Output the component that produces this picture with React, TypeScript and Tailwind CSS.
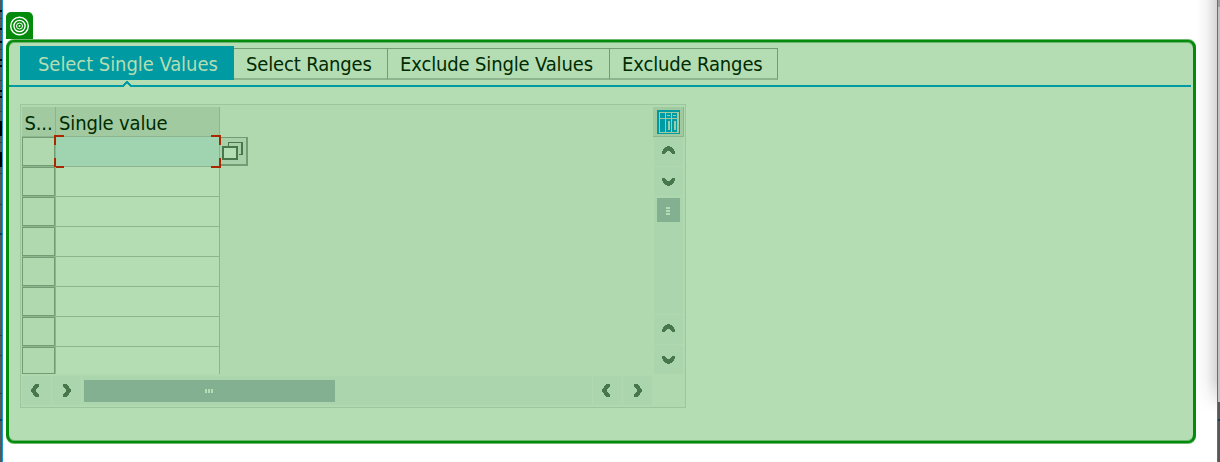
import React from "react";

type Direction = "up" | "down" | "left" | "right";

const chevrons: Record<Direction, string> = {
  up: "M5 0h3v1h2v1h1v1h1v2h1v3h-3v-1h-1v-1h-1v-1h-3v1h-1v1h-1v1h-3v-3h1v-2h1v-1h1v-1h2z",
  down: "M5 8h3v-1h2v-1h1v-1h1v-2h1v-3h-3v1h-1v1h-1v1h-3v-1h-1v-1h-1v-1h-3v3h1v2h1v1h1v1h2z",
  left: "M8 0v3h-1v1h-1v1h-1v3h1v1h1v1h1v3h-4v-1h-1v-1h-1v-2h-1v-1h-1v-3h1v-1h1v-2h1v-1h1v-1z",
  right: "M0 0v3h1v1h1v1h1v3h-1v1h-1v1h-1v3h4v-1h1v-1h1v-2h1v-1h1v-3h-1v-1h-1v-2h-1v-1h-1v-1z",
};

const chevronPadding: Record<Direction, string> = {
  up: "pt-[9px] pl-[8px]",
  down: "pt-[11px] pl-[8px]",
  left: "pt-[8px] pl-[9px]",
  right: "pt-[8px] pl-[11px]",
};

function ScrollButton({ dir }: { dir: Direction }) {
  const vertical = dir === "up" || dir === "down";
  const w = vertical ? 13 : 8;
  const h = vertical ? 8 : 13;
  return (
    <div className={`h-[29px] w-[29px] shrink-0 bg-[#abd5ac] ${chevronPadding[dir]}`}>
      <svg
        className="block"
        width={w}
        height={h}
        viewBox={`0 0 ${w} ${h}`}
        fill="#48774c"
        shapeRendering="crispEdges"
      >
        <path d={chevrons[dir]} />
      </svg>
    </div>
  );
}

function Target() {
  return (
    <svg className="block" width="27" height="27" viewBox="0 0 27 27" fill="none" stroke="#fff" strokeWidth="1.4">
      <circle cx="13.5" cy="14" r="8.8" />
      <circle cx="13.5" cy="14" r="5.6" />
      <circle cx="13.5" cy="14" r="3" strokeWidth="1" />
      <circle cx="13.5" cy="14" r="1" fill="#fff" stroke="none" />
    </svg>
  );
}

function ColumnsIcon() {
  return (
    <svg className="block" width="23" height="24" viewBox="0 0 23 24" shapeRendering="crispEdges">
      <path fill="#009aa2" d="M0 0h23v24h-23z" />
      <path fill="#a1caa1" d="M2 2h20v21h-20z" />
      <path
        fill="#009aa2"
        d="M3 3h5v5h-5zM9 3h5v5h-5zM15 3h5v5h-5zM3 9h5v13h-5zM9 9h5v13h-5zM15 9h5v13h-5z"
      />
      <path fill="#a1caa1" d="M10 5h3v1h-3zM16 5h3v1h-3zM11 11h2v9h-2zM17 11h2v9h-2z" />
    </svg>
  );
}

function ValueHelpIcon() {
  return (
    <svg className="block" width="21" height="18" viewBox="0 0 21 18" shapeRendering="crispEdges">
      <path fill="#48774c" d="M6 0h15v13h-4v-1h2v-11h-12v3h-1z" />
      <path fill="#48774c" d="M0 4h16v14h-16z" />
      <path fill="#b4ddb4" d="M2 6h12v10h-12z" />
    </svg>
  );
}

const tabs = [
  { label: "Select Ranges", width: "w-[154px]" },
  { label: "Exclude Single Values", width: "w-[222px]" },
  { label: "Exclude Ranges", width: "w-[168px]" },
];

const darkMarks = [10, 28, 41, 59, 65, 90, 96];
const faintMarks = [18, 49, 80, 111, 142, 173, 204, 335, 355, 393];

export default function App() {
  return (
    <div className="flex h-[462px] w-[1220px] overflow-hidden bg-white font-['DejaVu_Sans_Condensed','DejaVu_Sans',sans-serif] text-[20px] leading-[28px] tracking-[-0.14px] whitespace-nowrap text-[#002b00]">
      <div className="relative w-[2px] shrink-0 bg-[#575757]">
        {faintMarks.map((y) => (
          <div key={y} className="absolute left-0 h-px w-[2px] bg-[#3c3c3c]" style={{ top: y }} />
        ))}
        {darkMarks.map((y) => (
          <div key={y} className="absolute left-0 h-[2px] w-[2px] bg-black" style={{ top: y }} />
        ))}
        <div className="absolute top-[121px] left-0 h-[15px] w-[2px] bg-black" />
        <div className="absolute top-[152px] left-0 h-[15px] w-[2px] bg-black" />
        <div className="absolute top-[233px] left-0 h-[2px] w-[2px] bg-[#0b3f5c]" />
        <div className="absolute top-[419px] left-0 h-[2px] w-[2px] bg-[#0b3f5c]" />
      </div>
      <div className="mr-[3px] w-px shrink-0 bg-[#1698d2]" />

      <main className="w-[1190px] shrink-0 pt-[12px]">
        <div className="mb-px h-[27px] w-[27px] rounded-t-[5px] bg-[#048b0b]">
          <Target />
        </div>

        <section className="h-[403px] rounded-[8px] border-x-[3px] border-y-2 border-[#048b0b] bg-[#b4ddb4] pt-[4px] shadow-[0_-1px_0_#70b973,0_1px_0_#70b973,inset_0_1px_0_#6cb56f,inset_0_-1px_0_#6cb56f]">
          <nav className="flex h-[34px] pl-[11px]">
            <div className="w-[214px] bg-[#009aa2] pt-[4px] pl-[18px] tracking-[-0.06px] text-[#b4ddb4]">
              Select Single Values
            </div>
            {tabs.map((t) => (
              <div
                key={t.label}
                className={`${t.width} mt-[2px] h-[32px] border-t border-r border-b-2 border-t-[#729c74] border-r-[#729c74] border-b-[#8db58d] pt-px pl-[12px]`}
              >
                {t.label}
              </div>
            ))}
          </nav>
          <svg className="block" width="1184" height="7" viewBox="0 0 1184 7" shapeRendering="crispEdges">
            <path d="M0 5h1182v2h-1182z" fill="#009aa2" />
            <path d="M115 5h6v2h-6z" fill="#b4ddb4" />
            <path
              d="M117 1h2v1h1v1h1v1h1v1h1v2h-2v-1h-1v-1h-1v-1h-2v1h-1v1h-1v1h-2v-2h1v-1h1v-1h1v-1h1z"
              fill="#009aa2"
            />
          </svg>

          <div className="mt-[17px] ml-[11px] flex h-[304px] w-[666px] flex-col gap-[2px] border border-[#9cc69d] bg-[#b0d9b0] pt-[2px] pr-px pl-px">
            <div className="flex h-[267px]">
              <div className="w-[198px] border-r border-[#8db58d] bg-[#b4ddb4]">
                <div className="flex h-[30px] border-b border-[#8db58d] bg-[#a1caa1]">
                  <div className="w-[34px] border-r border-[#8db58d] pt-[2px] pl-[2.5px]">S...</div>
                  <div className="pt-[2px] pl-[3px]">Single value</div>
                </div>
                {Array.from({ length: 8 }, (_, i) => (
                  <div
                    key={i}
                    className={`relative flex ${i === 7 ? "h-[27px]" : "h-[30px] border-b border-[#8db58d]"}`}
                  >
                    <div className="w-[34px] border-r border-[#8db58d]">
                      <div className="h-full w-[33px] border border-[#729c74] bg-[#b0d9b0]" />
                    </div>
                    {i === 0 && (
                      <>
                        <div className="h-[29px] w-[163px] bg-[#a0d3b0]" />
                        <svg
                          className="absolute -top-[2px] left-[32px]"
                          width="167"
                          height="33"
                          fill="none"
                          stroke="#aa2700"
                          strokeWidth="2"
                          shapeRendering="crispEdges"
                        >
                          <path d="M10 1H1V10M157 1H166V10M10 32H1V23M157 32H166V23" />
                        </svg>
                      </>
                    )}
                  </div>
                ))}
              </div>
              <div className="mt-[30px] h-[29px] w-[28px] border-t border-r-2 border-b-2 border-[#729c74] bg-[#a8d1a9] pt-[4px] pl-[2px]">
                <ValueHelpIcon />
              </div>
              <div className="ml-auto flex w-[31px] flex-col items-center">
                <div className="h-[30px] w-[31px] shrink-0 border-r border-b border-[#8db58d] bg-[#a1caa1] pt-[3px] pl-[4px]">
                  <ColumnsIcon />
                </div>
                <div className="flex flex-col gap-px">
                  <ScrollButton dir="up" />
                  <ScrollButton dir="down" />
                  <div className="h-[117px] w-[29px] bg-[#abd5ac] pt-px pl-[3px]">
                    <div className="flex h-[24px] w-[23px] flex-col gap-px bg-[#82b090] pt-[9px] pl-[9px]">
                      <div className="h-[2px] w-[4px] bg-[#b4ddb4]" />
                      <div className="h-[2px] w-[4px] bg-[#b4ddb4]" />
                      <div className="h-[2px] w-[4px] bg-[#b4ddb4]" />
                    </div>
                  </div>
                  <ScrollButton dir="up" />
                  <ScrollButton dir="down" />
                </div>
              </div>
            </div>
            <div className="flex gap-px">
              <ScrollButton dir="left" />
              <ScrollButton dir="right" />
              <div className="h-[29px] w-[510px] bg-[#abd5ac] pt-[4px] pl-[2px]">
                <div className="flex h-[22px] w-[251px] gap-px bg-[#82b090] pt-[9px] pl-[121px]">
                  <div className="h-[4px] w-[2px] bg-[#b4ddb4]" />
                  <div className="h-[4px] w-[2px] bg-[#b4ddb4]" />
                  <div className="h-[4px] w-[2px] bg-[#b4ddb4]" />
                </div>
              </div>
              <ScrollButton dir="left" />
              <ScrollButton dir="right" />
            </div>
          </div>
        </section>
      </main>

      <div className="w-[21px] shrink-0">
        <div className="h-[380px] bg-linear-to-r from-white via-[#f4f4f4] to-[#d6d6d6]" />
        <div className="h-[32px] bg-linear-to-r from-white via-[#f4f4f4] to-[#d6d6d6] mask-b-from-0% mask-b-to-100%" />
      </div>
      <div className="w-px shrink-0 bg-[#1b86bd]" />
      <div className="flex w-[2px] shrink-0 flex-col">
        <div className="h-[7px] bg-[#a0a0a0]" />
        <div className="h-[395px] bg-[#c4c4c8]" />
        <div className="h-[17px] bg-[#575757]" />
        <div className="h-[2px] bg-[#0b3f5c]" />
        <div className="flex-1 bg-[#575757]" />
      </div>
    </div>
  );
}
